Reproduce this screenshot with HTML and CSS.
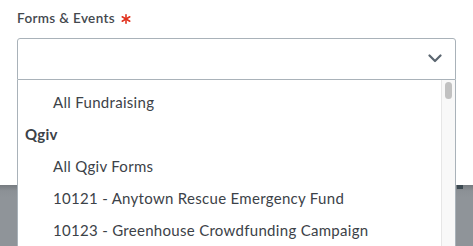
FILE: index.html
```html
<!DOCTYPE html>
<html>
<head>
<meta charset="utf-8">
<link rel="stylesheet" href="styles.css">
</head>
<body>
<div class="modal">
  <div class="field">
    <div class="label">Forms &amp; Events <svg class="req" width="10" height="10" viewBox="0 0 10 10"><g stroke="#e2321f" stroke-width="1.6" stroke-linecap="round"><path d="M5 0.8 V9.2"/><path d="M1.2 2.8 L8.8 7.2"/><path d="M1.2 7.2 L8.8 2.8"/></g></svg></div>
    <div class="select">
      <svg class="chev" width="14" height="9" viewBox="0 0 14 9"><path d="M1.5 1.5 L7 7 L12.5 1.5" fill="none" stroke="#5b6670" stroke-width="2.2" stroke-linecap="round" stroke-linejoin="round"/></svg>
      <div class="menu">
        <div class="options">
          <div class="opt">All Fundraising</div>
          <div class="group">Qgiv</div>
          <div class="opt">All Qgiv Forms</div>
          <div class="opt">10121 - Anytown Rescue Emergency Fund</div>
          <div class="opt">10123 - Greenhouse Crowdfunding Campaign</div>
        </div>
        <div class="scroll"><div class="thumb"></div></div>
      </div>
    </div>
  </div>
</div>
<div class="backdrop"><div class="corner"></div></div>
</body>
</html>
```
FILE: styles.css
```css
html, body {
  margin: 0;
  padding: 0;
  width: 473px;
  height: 246px;
  overflow: hidden;
  font-family: Lato, "Open Sans", sans-serif;
  color: #3c4248;
}
.modal {
  background: #fff;
  height: 185px;
  padding: 0 17px;
  box-sizing: border-box;
}
.field {
  padding-top: 9px;
}
.label {
  font-size: 13.5px;
  font-weight: 600;
  color: #43484e;
  line-height: 18px;
  height: 18px;
  margin-bottom: 11px;
  letter-spacing: 0.35px;
}
.req {
  vertical-align: -1px;
  margin-left: 2px;
}
.select {
  position: relative;
  height: 40px;
  border: 1px solid #a9b2b9;
  border-radius: 3px 3px 0 0;
  background: #fff;
}
.chev {
  position: absolute;
  right: 13px;
  top: 15px;
}
.menu {
  position: absolute;
  left: -1px;
  right: -1px;
  top: 41px;
  height: 170px;
  border-left: 1px solid #a9b2b9;
  border-right: 1px solid #a9b2b9;
  background: #fff;
  display: flex;
  z-index: 5;
}
.options {
  flex: 1;
  padding-top: 6px;
  font-size: 15px;
  letter-spacing: 0.3px;
}
.opt, .group {
  height: 32px;
  line-height: 32px;
  white-space: nowrap;
}
.opt {
  padding-left: 35px;
}
.group {
  padding-left: 7px;
  font-weight: 700;
}
.scroll {
  width: 13px;
  background: #f8f8f8;
  border-left: 1px solid #e6e6e6;
  position: relative;
}
.thumb {
  position: absolute;
  left: 3px;
  top: 2px;
  width: 7px;
  height: 17px;
  border-radius: 4px;
  background: #c1c1c1;
}
.backdrop {
  height: 61px;
  background: linear-gradient(#767b80 0px, #8c9196 6px, #8f9499 12px);
  position: relative;
}
.corner {
  position: absolute;
  left: 457px;
  top: 0;
  width: 6px;
  height: 4px;
  background: #3d4a52;
}
```
